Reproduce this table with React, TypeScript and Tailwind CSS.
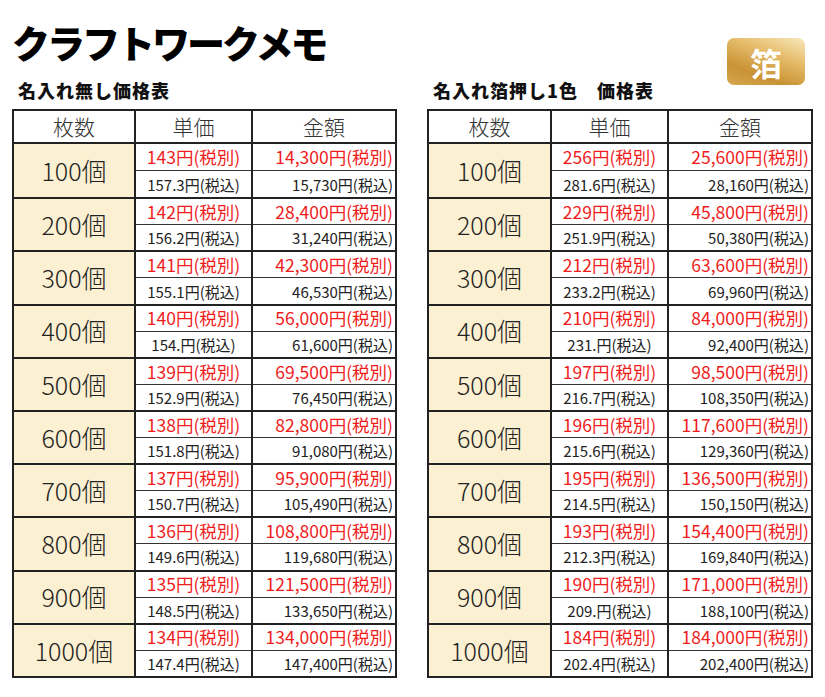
import clsx from "clsx";

type Row = {
  qty: string;
  unit: string;
  total: string;
  unitTax: string;
  totalTax: string;
};

const plainRows: Row[] = [
  { qty: "100", unit: "143", total: "14,300", unitTax: "157.3", totalTax: "15,730" },
  { qty: "200", unit: "142", total: "28,400", unitTax: "156.2", totalTax: "31,240" },
  { qty: "300", unit: "141", total: "42,300", unitTax: "155.1", totalTax: "46,530" },
  { qty: "400", unit: "140", total: "56,000", unitTax: "154.", totalTax: "61,600" },
  { qty: "500", unit: "139", total: "69,500", unitTax: "152.9", totalTax: "76,450" },
  { qty: "600", unit: "138", total: "82,800", unitTax: "151.8", totalTax: "91,080" },
  { qty: "700", unit: "137", total: "95,900", unitTax: "150.7", totalTax: "105,490" },
  { qty: "800", unit: "136", total: "108,800", unitTax: "149.6", totalTax: "119,680" },
  { qty: "900", unit: "135", total: "121,500", unitTax: "148.5", totalTax: "133,650" },
  { qty: "1000", unit: "134", total: "134,000", unitTax: "147.4", totalTax: "147,400" },
];

const foilRows: Row[] = [
  { qty: "100", unit: "256", total: "25,600", unitTax: "281.6", totalTax: "28,160" },
  { qty: "200", unit: "229", total: "45,800", unitTax: "251.9", totalTax: "50,380" },
  { qty: "300", unit: "212", total: "63,600", unitTax: "233.2", totalTax: "69,960" },
  { qty: "400", unit: "210", total: "84,000", unitTax: "231.", totalTax: "92,400" },
  { qty: "500", unit: "197", total: "98,500", unitTax: "216.7", totalTax: "108,350" },
  { qty: "600", unit: "196", total: "117,600", unitTax: "215.6", totalTax: "129,360" },
  { qty: "700", unit: "195", total: "136,500", unitTax: "214.5", totalTax: "150,150" },
  { qty: "800", unit: "193", total: "154,400", unitTax: "212.3", totalTax: "169,840" },
  { qty: "900", unit: "190", total: "171,000", unitTax: "209.", totalTax: "188,100" },
  { qty: "1000", unit: "184", total: "184,000", unitTax: "202.4", totalTax: "202,400" },
];

function PriceTable({ rows, firstCol }: { rows: Row[]; firstCol: string }) {
  return (
    <div className="border-2 border-[#222]">
      <div className="flex h-[33px] border-b-2 border-[#222] text-[21px] font-light text-[#333]">
        <div className={clsx(firstCol, "flex items-center justify-center border-r-2 border-[#222]")}>
          枚数
        </div>
        <div className="flex w-[117px] items-center justify-center border-r-2 border-[#222]">
          単価
        </div>
        <div className="flex flex-1 items-center justify-center">金額</div>
      </div>
      {rows.map((r, i) => (
        <div
          key={r.qty}
          className={clsx("flex h-[53.2px]", i > 0 && "border-t-2 border-[#222]")}
        >
          <div
            className={clsx(
              firstCol,
              "flex items-center justify-center border-r-2 border-[#222] bg-[#fcf0d2] text-[25px] font-light text-[#222]"
            )}
          >
            {r.qty}個
          </div>
          <div className="flex w-[117px] flex-col border-r-2 border-[#222]">
            <div className="flex flex-1 items-center justify-center border-b border-[#333] text-[17.5px] leading-none text-[#f01c1c]">
              {r.unit}円(税別)
            </div>
            <div className="flex flex-1 items-center justify-center text-[15px] leading-none text-[#222]">
              {r.unitTax}円(税込)
            </div>
          </div>
          <div className="flex flex-1 flex-col">
            <div className="flex flex-1 items-center justify-end border-b border-[#333] pr-[2px] text-[17.5px] leading-none text-[#f01c1c]">
              {r.total}円(税別)
            </div>
            <div className="flex flex-1 items-center justify-end pr-[2px] text-[15px] leading-none text-[#222]">
              {r.totalTax}円(税込)
            </div>
          </div>
        </div>
      ))}
    </div>
  );
}

export default function App() {
  return (
    <div className="h-[697px] w-[825px] bg-white px-[12px] font-['Noto_Sans_CJK_JP','Noto_Sans',sans-serif]">
      <div className="flex h-[79px] items-start justify-between">
        <h1 className="mt-[23px] text-[38px] font-black leading-none tracking-[-3px] text-black">
          クラフトワークメモ
        </h1>
        <div className="mr-[8px] mt-[38px] flex h-[47px] w-[78px] shrink-0 items-center justify-center rounded-[7px] bg-[linear-gradient(200deg,#f8e8bd_0%,#e6bd6c_35%,#c99234_72%,#d6a852_100%)] text-[32px] font-bold leading-none text-white">
          箔
        </div>
      </div>
      <div className="flex gap-[30px]">
        <section className="w-[385px]">
          <h2 className="mb-[10px] pl-[6px] pt-[2px] text-[18px] font-black leading-none tracking-[1px] text-[#111]">
            名入れ無し価格表
          </h2>
          <PriceTable rows={plainRows} firstCol="w-[122px]" />
        </section>
        <section className="w-[386px]">
          <h2 className="mb-[10px] pl-[6px] pt-[2px] text-[18px] font-black leading-none tracking-[1px] text-[#111]">
            名入れ箔押し1色　価格表
          </h2>
          <PriceTable rows={foilRows} firstCol="w-[123px]" />
        </section>
      </div>
    </div>
  );
}
